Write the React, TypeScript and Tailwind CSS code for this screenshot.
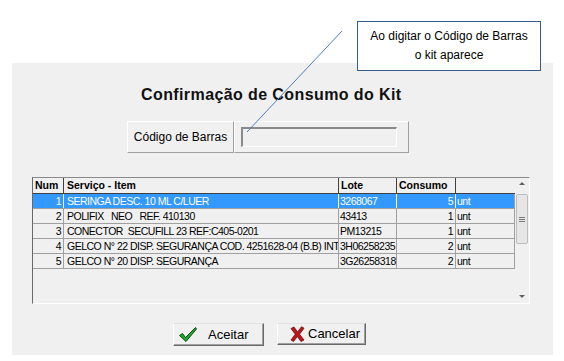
import React from "react";

type Row = {
  num: number;
  item: string;
  lote: string;
  consumo: number;
  unid: string;
};

const rows: Row[] = [
  { num: 1, item: "SERINGA DESC. 10 ML C/LUER", lote: "3268067", consumo: 5, unid: "unt" },
  { num: 2, item: "POLIFIX   NEO   REF. 410130", lote: "43413", consumo: 1, unid: "unt" },
  { num: 3, item: "CONECTOR  SECUFILL 23 REF:C405-0201", lote: "PM13215", consumo: 1, unid: "unt" },
  {
    num: 4,
    item: "GELCO N° 22 DISP. SEGURANÇA COD. 4251628-04 (B.B) INTR",
    lote: "3H06258235",
    consumo: 2,
    unid: "unt",
  },
  { num: 5, item: "GELCO N° 20 DISP. SEGURANÇA", lote: "3G26258318", consumo: 2, unid: "unt" },
];

const CheckIcon = () => (
  <svg width="20" height="17" viewBox="0 0 20 17">
    <path
      d="M1.5 9.5 L4.5 7.5 L7.5 11.5 L17.5 1.5 L18.5 3 L8 15.5 Z"
      fill="#22a22e"
      stroke="#0d4f16"
      strokeWidth="1"
      strokeLinejoin="round"
    />
  </svg>
);

const CrossIcon = () => (
  <svg width="15" height="16" viewBox="0 0 15 16">
    <path
      d="M1 2.5 L4 1 L7.5 6 L11.5 0.8 L14 2.2 L9.5 8.2 L14 14 L11 15.5 L7.3 10.5 L3.5 15.5 L1 14 L5.3 8.2 Z"
      fill="#c0161b"
      stroke="#6b0a0d"
      strokeWidth="0.8"
      strokeLinejoin="round"
    />
  </svg>
);

const cell = "h-full shrink-0 overflow-hidden whitespace-pre px-[2px] border-r border-[#a0a0a0]";

const GridRow = ({ row, selected }: { row: Row; selected: boolean }) => (
  <div
    className={`flex h-[15px] items-center text-[10.5px] leading-[15px] tracking-[-0.5px] border-b border-[#a0a0a0] ${
      selected ? "bg-[#3399ff] text-white" : "text-black"
    }`}
  >
    <div className={`${cell} w-[31px] text-right ${selected ? "border-white" : ""}`}>{row.num}</div>
    <div className={`${cell} w-[275px] pl-[3px] ${selected ? "border-white" : ""}`}>{row.item}</div>
    <div className={`${cell} w-[58px] pl-[1px] ${selected ? "border-white" : ""}`}>{row.lote}</div>
    <div className={`${cell} w-[59px] text-right ${selected ? "border-white" : ""}`}>{row.consumo}</div>
    <div className={`${cell} w-[59px] pl-[1px]`}>{row.unid}</div>
  </div>
);

export default function App(): React.ReactElement {
  return (
    <div className="relative h-[361px] w-[564px] overflow-hidden bg-white pl-[12px] pt-[63px] font-['Liberation_Sans',Arial,sans-serif] text-black">
      <div className="flex h-[292px] w-[541px] flex-col bg-[#f0f0f0]">
        <h1 className="mt-[22px] pl-[129px] text-[16px] font-bold leading-5 tracking-[0.4px] text-[#111]">
          Confirmação de Consumo do Kit
        </h1>

        <div className="ml-[115px] mt-4 flex">
          <div className="flex h-[32px] w-[107px] items-center justify-center border border-b-[#a0a0a0] border-l-white border-r-[#a0a0a0] border-t-white text-[12px]">
            Código de Barras
          </div>
          <div className="h-[32px] w-[175px] border border-b-[#a0a0a0] border-l-white border-r-[#a0a0a0] border-t-white pl-[6px] pt-[5px]">
            <div className="h-[20px] w-[156px] border-b border-l-2 border-r border-t-2 border-b-white border-l-[#8a8a8a] border-r-white border-t-[#8a8a8a] bg-[#f0f0f0]" />
          </div>
        </div>

        <div className="ml-[20px] mt-6 flex h-[127px] w-[498px] border border-b-white border-l-[#696969] border-r-white border-t-[#8a8a8a]">
          <div className="flex w-[482px] flex-col">
            <div className="flex h-[16px] items-center border-b border-[#404040] text-[10.5px] font-bold leading-[15px]">
              <div className="h-full w-[31px] shrink-0 border-r border-[#404040] pl-[2px]">Num</div>
              <div className="h-full w-[275px] shrink-0 border-r border-[#404040] pl-[3px]">Serviço - Item</div>
              <div className="h-full w-[58px] shrink-0 border-r border-[#404040] pl-[2px]">Lote</div>
              <div className="h-full w-[59px] shrink-0 border-r border-[#404040] pl-[2px]">Consumo</div>
              <div className="h-full w-[59px] shrink-0" />
            </div>
            {rows.map((r, i) => (
              <GridRow key={r.num} row={r} selected={i === 0} />
            ))}
          </div>

          <div className="relative flex w-[14px] flex-col items-center bg-[#f0f0f0]">
            <div className="mt-[4px] h-0 w-0 border-x-[3px] border-b-[3px] border-x-transparent border-b-[#606060]" />
            <div className="mt-[9px] flex h-[50px] w-[12px] flex-col items-center justify-center gap-[1px] rounded-[2px] border border-[#bdbdbd] bg-[#e6e6e6]">
              <div className="h-px w-[6px] bg-[#7a7a7a]" />
              <div className="h-px w-[6px] bg-[#7a7a7a]" />
              <div className="h-px w-[6px] bg-[#7a7a7a]" />
            </div>
            <div className="absolute bottom-[5px] h-0 w-0 border-x-[3px] border-t-[3px] border-x-transparent border-t-[#606060]" />
          </div>
        </div>

        <div className="ml-[161px] mt-[19px] flex items-start gap-[13px] text-[13px]">
          <button className="flex h-[23px] w-[91px] items-center border border-b-[#696969] border-l-white border-r-[#696969] border-t-[#e0e0e0] pl-[4px] shadow-[inset_-1px_-1px_0_#a0a0a0]">
            <CheckIcon />
            <span className="ml-[10px]">Aceitar</span>
          </button>
          <button className="flex h-[22px] w-[89px] items-center border border-b-[#696969] border-l-white border-r-[#696969] border-t-[#e0e0e0] pl-[12px] shadow-[inset_-1px_-1px_0_#a0a0a0]">
            <CrossIcon />
            <span className="ml-[3px]">Cancelar</span>
          </button>
        </div>
      </div>

      <svg className="pointer-events-none absolute left-0 top-0" width="564" height="361">
        <line x1="342" y1="31" x2="247" y2="132" stroke="#4a7ebb" strokeWidth="1" />
      </svg>

      <div className="absolute left-[357px] top-[21px] flex h-[50px] w-[184px] flex-col items-center justify-center border border-[#385d8a] bg-white text-[12px] leading-[19px]">
        <span>Ao digitar o Código de Barras</span>
        <span>o kit aparece</span>
      </div>
    </div>
  );
}
